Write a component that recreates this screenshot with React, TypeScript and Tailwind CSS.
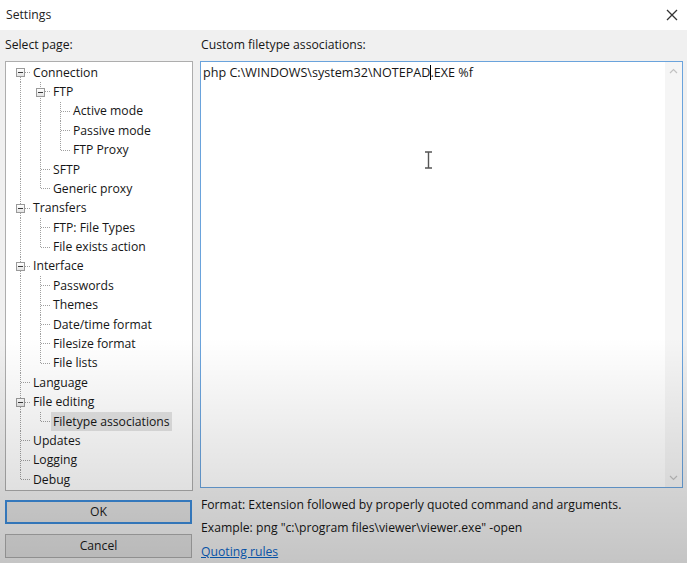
import React from "react";

type Node = { t: string; c?: Node[]; sel?: boolean };
type Row = { t: string; depth: number; guides: boolean[]; last: boolean; kids: boolean; firstRoot: boolean; sel?: boolean };

const tree: Node[] = [
  {
    t: "Connection",
    c: [
      { t: "FTP", c: [{ t: "Active mode" }, { t: "Passive mode" }, { t: "FTP Proxy" }] },
      { t: "SFTP" },
      { t: "Generic proxy" },
    ],
  },
  { t: "Transfers", c: [{ t: "FTP: File Types" }, { t: "File exists action" }] },
  {
    t: "Interface",
    c: [{ t: "Passwords" }, { t: "Themes" }, { t: "Date/time format" }, { t: "Filesize format" }, { t: "File lists" }],
  },
  { t: "Language" },
  { t: "File editing", c: [{ t: "Filetype associations", sel: true }] },
  { t: "Updates" },
  { t: "Logging" },
  { t: "Debug" },
];

function flatten(nodes: Node[], depth: number, guides: boolean[], out: Row[]) {
  nodes.forEach((n, i) => {
    const last = i === nodes.length - 1;
    out.push({ t: n.t, depth, guides, last, kids: !!n.c, firstRoot: depth === 0 && i === 0, sel: n.sel });
    if (n.c) flatten(n.c, depth + 1, [...guides, !last], out);
  });
  return out;
}

const rows = flatten(tree, 0, [], []);
const LINE = "#a0a0a0";

function Col({ row, k }: { row: Row; k: number }) {
  const own = k === row.depth;
  return (
    <div className="relative flex h-full w-[20px] shrink-0 items-center justify-center">
      <svg className="absolute inset-0 h-full w-full" shapeRendering="crispEdges">
        {!own && row.guides[k] && (
          <line x1="10.5" x2="10.5" y1="0" y2="100%" stroke={LINE} strokeDasharray="1 1" />
        )}
        {own && (
          <>
            <line x1="10.5" x2="10.5" y1={row.firstRoot ? "50%" : "0"} y2="50%" stroke={LINE} strokeDasharray="1 1" />
            {!row.last && <line x1="10.5" x2="10.5" y1="50%" y2="100%" stroke={LINE} strokeDasharray="1 1" />}
            <line x1="11" x2="20" y1="50%" y2="50%" stroke={LINE} strokeDasharray="1 1" />
          </>
        )}
      </svg>
      {own && row.kids && (
        <div className="relative flex h-[9px] w-[9px] items-center justify-center border border-[#9a9a9a] bg-gradient-to-b from-white to-[#e4e4e4]">
          <div className="h-px w-[5px] bg-[#3a3a3a]" />
        </div>
      )}
    </div>
  );
}

export default function App() {
  return (
    <div
      className="relative h-[563px] w-[687px] overflow-hidden bg-[#f0f0f0] text-[12.2px] text-[#161616]"
      style={{ fontFamily: '"Open Sans", "Noto Sans", sans-serif' }}
    >
      {/* title bar */}
      <div className="flex h-[30px] items-center justify-between bg-white pl-[6px] pr-[9px]">
        <span className="text-[12.2px] text-[#222]">Settings</span>
        <svg width="12" height="12" viewBox="0 0 12 12">
          <path d="M1 1 L11 11 M11 1 L1 11" stroke="#333" strokeWidth="1.3" />
        </svg>
      </div>

      <div className="flex gap-[7px] pl-[5px] pr-[4px]">
        {/* left column */}
        <div className="flex w-[188px] shrink-0 flex-col">
          <div className="flex h-[31px] items-center">Select page:</div>
          <div className="h-[430px] border border-[#adadad] bg-white pl-[4px] pt-[1px]">
            {rows.map((r, i) => (
              <div key={i} className="flex h-[19.4px] items-center">
                {Array.from({ length: r.depth + 1 }).map((_, k) => (
                  <Col key={k} row={r} k={k} />
                ))}
                <span
                  className={
                    r.sel
                      ? "ml-px flex h-full items-center whitespace-nowrap bg-[#e3e3e3] px-[2px]"
                      : "ml-px flex h-full items-center whitespace-nowrap px-[2px]"
                  }
                >
                  {r.t}
                </span>
              </div>
            ))}
          </div>
          <button className="mt-[9px] h-[24px] w-[187px] border-2 border-[#3c8ad8] bg-[#e1e1e1] text-[12.2px] text-[#1a1a1a]">
            OK
          </button>
          <button className="mt-[10px] h-[24px] w-[187px] border border-[#adadad] bg-[#e1e1e1] text-[12.2px] text-[#1a1a1a]">
            Cancel
          </button>
        </div>

        {/* right column */}
        <div className="flex min-w-0 flex-1 flex-col">
          <div className="flex h-[31px] items-center pl-px">Custom filetype associations:</div>
          <div className="relative flex h-[427px] border border-[#6aa3dc] bg-white">
            <div className="flex-1 pl-[2px] pt-[2px] text-[12.6px]">
              <span className="whitespace-nowrap">
                php C:\WINDOWS\system32\NOTEPAD
                <span className="relative">
                  <span className="absolute left-0 top-[1px] h-[15px] border-l border-black" />
                </span>
                .EXE %f
              </span>
            </div>
            <div className="flex w-[17px] flex-col items-center justify-between bg-[#f5f5f5] py-[6px]">
              <svg width="9" height="6" viewBox="0 0 9 6">
                <path d="M1 5 L4.5 1.5 L8 5" fill="none" stroke="#c2c2c2" strokeWidth="1.2" />
              </svg>
              <svg width="9" height="6" viewBox="0 0 9 6">
                <path d="M1 1 L4.5 4.5 L8 1" fill="none" stroke="#c2c2c2" strokeWidth="1.2" />
              </svg>
            </div>
            {/* I-beam mouse cursor */}
            <svg className="absolute left-[223px] top-[89px]" width="9" height="18" viewBox="0 0 9 18">
              <path d="M1 1 H8 M1 17 H8 M4.5 1 V17" stroke="#555" strokeWidth="1.4" fill="none" />
            </svg>
          </div>
          <div className="mt-[8px] pl-px leading-[17px]">Format: Extension followed by properly quoted command and arguments.</div>
          <div className="mt-[6px] pl-px leading-[17px]">Example: png "c:\program files\viewer\viewer.exe" -open</div>
          <div className="mt-[7px] pl-px leading-[17px] text-[#0a64c8] underline">Quoting rules</div>
        </div>
      </div>

      {/* video vignette darkening toward the bottom */}
      <div className="pointer-events-none absolute inset-0 bg-[linear-gradient(to_bottom,rgba(0,0,0,0)_0%,rgba(0,0,0,0)_60%,rgba(0,0,0,0.18)_100%)]" />
    </div>
  );
}
